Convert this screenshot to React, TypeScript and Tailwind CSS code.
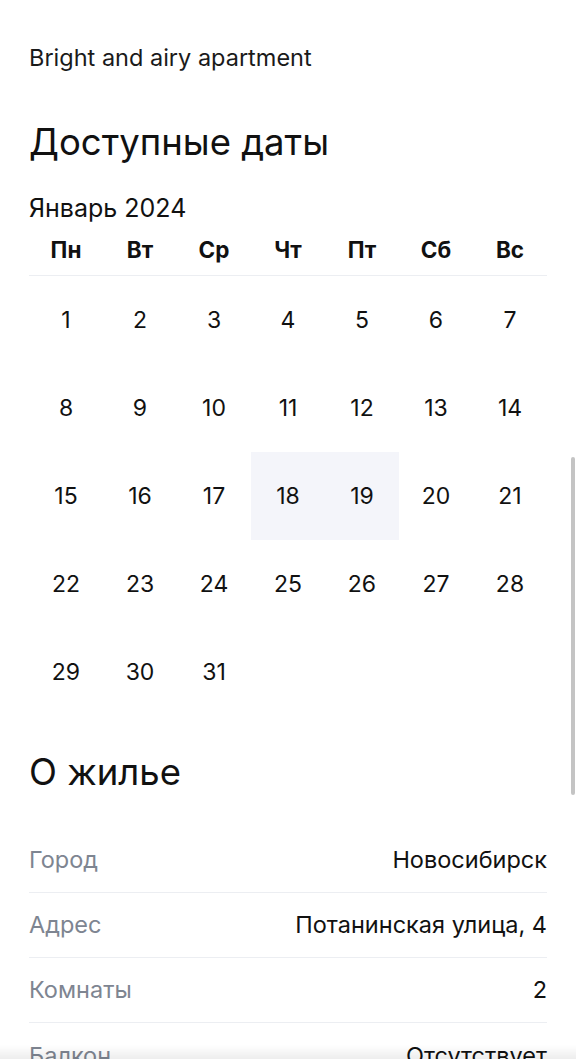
import React from "react";

const weekDays = ["Пн", "Вт", "Ср", "Чт", "Пт", "Сб", "Вс"];

// January 2024 starts on Monday
const days: (number | null)[] = Array.from({ length: 35 }, (_, i) =>
  i < 31 ? i + 1 : null
);

const selected = [18, 19];

const details = [
  { label: "Город", value: "Новосибирск" },
  { label: "Адрес", value: "Потанинская улица, 4" },
  { label: "Комнаты", value: "2" },
  { label: "Балкон", value: "Отсутствует" },
];

const App: React.FC = () => {
  return (
    <div className="relative min-h-screen bg-white font-['Inter',sans-serif] text-[#111]">
      <div className="px-[29px] pt-[43px] pb-10">
        <p className="text-[23.5px] leading-[30px] text-[#1a1a1a]">
          Bright and airy apartment
        </p>

        <h2 className="mt-[47px] text-[36.5px] leading-[44px] font-normal">
          Доступные даты
        </h2>

        <div className="mt-[29px]">
          <div className="text-[25px] leading-[30px]">Январь 2024</div>
          <div className="grid grid-cols-7 border-b border-[#eceef2]">
            {weekDays.map((d) => (
              <div
                key={d}
                className="flex h-[52px] items-center justify-center pt-[2px] text-[22.5px] font-bold"
              >
                {d}
              </div>
            ))}
          </div>
          <div className="grid grid-cols-7">
            {days.map((d, i) => (
              <div
                key={i}
                className={
                  "flex h-[88px] items-center justify-center text-[23px] " +
                  (d !== null && selected.includes(d) ? "bg-[#f4f5fa]" : "")
                }
              >
                {d}
              </div>
            ))}
          </div>
        </div>

        <h2 className="mt-[34px] text-[36.5px] leading-[44px] font-normal">
          О жилье
        </h2>

        <div className="mt-[34px]">
          {details.map((row, i) => (
            <div
              key={row.label}
              className={
                "flex h-[65px] items-center justify-between text-[23.5px] " +
                (i < details.length - 1 ? "border-b border-[#eceef2]" : "")
              }
            >
              <span className="text-[#7e8591]">{row.label}</span>
              <span className="text-[#111]">{row.value}</span>
            </div>
          ))}
        </div>
      </div>

      {/* overlay scrollbar */}
      <div className="fixed right-[1px] top-[457px] h-[338px] w-[4px] rounded-full bg-[#c4c4c4]" />
      {/* bottom edge shade */}
      <div className="pointer-events-none fixed bottom-0 left-0 right-0 h-[14px] bg-gradient-to-b from-transparent to-[rgba(0,0,0,0.07)]" />
    </div>
  );
};

export default App;
